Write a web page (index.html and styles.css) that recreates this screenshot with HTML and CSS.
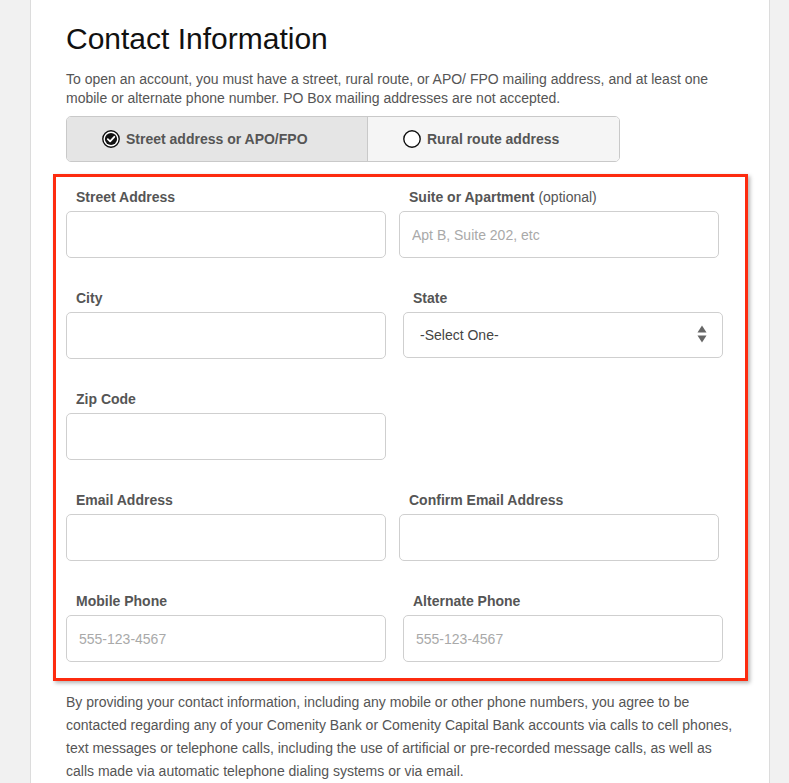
FILE: index.html
```html
<!DOCTYPE html>
<html lang="en">
<head>
<meta charset="utf-8">
<title>Contact Information</title>
<link rel="stylesheet" href="styles.css">
</head>
<body>
<main class="panel">
  <h1 class="title">Contact Information</h1>
  <p class="intro">To open an account, you must have a street, rural route, or APO/ FPO mailing address, and at least one<br>mobile or alternate phone number. PO Box mailing addresses are not accepted.</p>

  <div class="toggle">
    <div class="seg seg--on">
      <svg class="radio" width="18" height="18" viewBox="0 0 18 18" aria-hidden="true">
        <circle cx="9" cy="9" r="8.2" fill="#fff" stroke="#111" stroke-width="1.4"/>
        <circle cx="9" cy="9" r="6.1" fill="#111"/>
        <polyline points="5.8,9.2 8.1,11.4 12.3,6.8" fill="none" stroke="#fff" stroke-width="1.8" stroke-linecap="round" stroke-linejoin="round"/>
      </svg>
      <span class="seg-text">Street address or APO/FPO</span>
    </div>
    <div class="seg seg--off">
      <svg class="radio" width="18" height="18" viewBox="0 0 18 18" aria-hidden="true">
        <circle cx="9" cy="9" r="8.2" fill="#fff" stroke="#111" stroke-width="1.4"/>
      </svg>
      <span class="seg-text">Rural route address</span>
    </div>
  </div>

  <div class="highlight">
    <div class="grid">
      <div class="field">
        <label class="lbl">Street Address</label>
        <input class="inp" type="text">
      </div>
      <div class="field">
        <label class="lbl">Suite or Apartment <span class="opt">(optional)</span></label>
        <input class="inp" type="text" placeholder="Apt B, Suite 202, etc">
      </div>

      <div class="field">
        <label class="lbl">City</label>
        <input class="inp" type="text">
      </div>
      <div class="field field--shift">
        <label class="lbl">State</label>
        <div class="select-wrap">
          <select class="sel">
            <option>-Select One-</option>
          </select>
          <svg class="sel-arrows" width="10" height="18" viewBox="0 0 10 18" aria-hidden="true">
            <polygon points="5,0.5 9.5,7.5 0.5,7.5" fill="#666"/>
            <polygon points="0.5,10.5 9.5,10.5 5,17.5" fill="#666"/>
          </svg>
        </div>
      </div>

      <div class="field">
        <label class="lbl">Zip Code</label>
        <input class="inp" type="text">
      </div>
      <div class="field"></div>

      <div class="field">
        <label class="lbl">Email Address</label>
        <input class="inp" type="text">
      </div>
      <div class="field">
        <label class="lbl">Confirm Email Address</label>
        <input class="inp" type="text">
      </div>

      <div class="field">
        <label class="lbl">Mobile Phone</label>
        <input class="inp" type="text" placeholder="555-123-4567">
      </div>
      <div class="field field--shift">
        <label class="lbl">Alternate Phone</label>
        <input class="inp" type="text" placeholder="555-123-4567">
      </div>
    </div>
  </div>

  <p class="legal">By providing your contact information, including any mobile or other phone numbers, you agree to be<br>contacted regarding any of your Comenity Bank or Comenity Capital Bank accounts via calls to cell phones,<br>text messages or telephone calls, including the use of artificial or pre-recorded message calls, as well as<br>calls made via automatic telephone dialing systems or via email.</p>
</main>
</body>
</html>
```

FILE: styles.css
```css
* { box-sizing: border-box; }

html, body {
  margin: 0;
  padding: 0;
}

body {
  background: #f1f1f1;
  font-family: "Liberation Sans", Arial, Helvetica, sans-serif;
  color: #555;
}

.panel {
  margin-left: 30px;
  width: 740px;
  min-height: 783px;
  background: #fff;
  border-left: 1px solid #dcdcdc;
  border-right: 1px solid #dcdcdc;
  padding: 22px 0 0 35px;
}

.title {
  margin: 0;
  font-size: 30px;
  line-height: 34px;
  font-weight: normal;
  color: #111;
}

.intro {
  margin: 14px 0 0;
  font-size: 14px;
  line-height: 19px;
  color: #555;
}

.toggle {
  margin-top: 8px;
  display: flex;
  width: 554px;
  height: 46px;
  border: 1px solid #c9c9c9;
  border-radius: 5px;
  overflow: hidden;
}

.seg {
  display: flex;
  align-items: center;
  padding-left: 35px;
  gap: 6px;
  font-size: 14px;
  font-weight: bold;
  color: #555;
}

.seg--on {
  width: 301px;
  background: #e5e5e5;
  border-right: 1px solid #c9c9c9;
}

.seg--off {
  flex: 1;
  background: #f5f5f5;
}

.radio {
  display: block;
  flex: none;
}

.highlight {
  margin: 12px 0 0 -13px;
  width: 695px;
  border: 3px solid #fd2b0f;
  padding: 12px 25px 16px 10px;
  box-shadow: 2px 2px 4px rgba(0, 0, 0, 0.3);
}

.grid {
  display: grid;
  grid-template-columns: 320px 320px;
  column-gap: 13px;
  row-gap: 32px;
}

.field {
  display: flex;
  flex-direction: column;
}

.field--shift {
  margin-left: 4px;
  margin-right: -4px;
}

.lbl {
  display: block;
  padding-left: 10px;
  margin-bottom: 5px;
  font-size: 14px;
  line-height: 17px;
  font-weight: bold;
  color: #555;
}

.opt {
  font-weight: normal;
}

.inp {
  display: block;
  width: 100%;
  height: 47px;
  margin: 0;
  border: 1px solid #cfcfcf;
  border-radius: 5px;
  padding: 0 12px;
  font-family: "Liberation Sans", Arial, Helvetica, sans-serif;
  font-size: 14px;
  color: #333;
  background: #fff;
  outline: none;
}

.inp::placeholder {
  color: #a9a9a9;
}

.select-wrap {
  position: relative;
}

.sel {
  display: block;
  width: 100%;
  height: 46px;
  margin: 0;
  border: 1px solid #cfcfcf;
  border-radius: 5px;
  padding: 0 16px;
  font-family: "Liberation Sans", Arial, Helvetica, sans-serif;
  font-size: 14px;
  color: #444;
  background: #fff;
  -webkit-appearance: none;
  appearance: none;
  outline: none;
}

.sel-arrows {
  position: absolute;
  right: 16px;
  top: 13px;
  pointer-events: none;
}

.legal {
  margin: 10px 0 0;
  font-size: 14px;
  line-height: 23px;
  color: #555;
}
```
